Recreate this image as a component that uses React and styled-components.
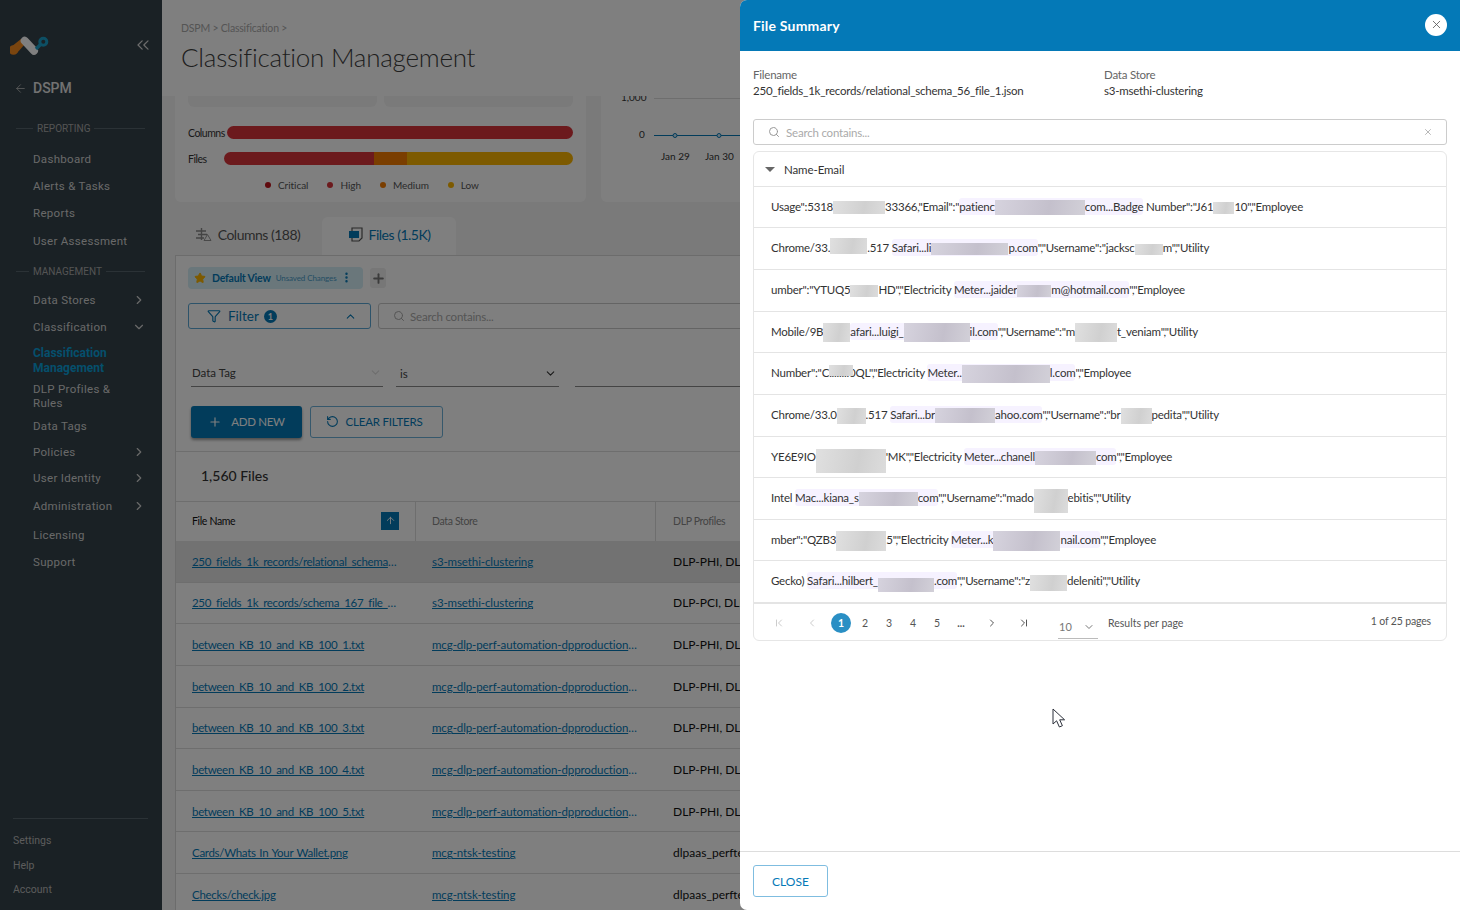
import React from "react"
import styled, { createGlobalStyle } from "styled-components"
import {
  ArrowLeft, ArrowUp, ChevronDown, ChevronFirst, ChevronLast, ChevronLeft, ChevronRight,
  ChevronUp, ChevronsLeft, EllipsisVertical, Filter, Plus, RotateCcw, Search, Star, X,
} from "lucide-react"

const BLUE = "#0479b7"

const GlobalStyle = createGlobalStyle`
  html, body { margin: 0; padding: 0; background: #fff; }
  * { box-sizing: border-box; }
`

const NAV_TOP = [
  { label: "Dashboard", h: 27 },
  { label: "Alerts & Tasks", h: 27 },
  { label: "Reports", h: 27 },
  { label: "User Assessment", h: 29 },
]

const FILES = [
  ["250_fields_1k_records/relational_schema_56_file_1.json", "s3-msethi-clustering", "DLP-PHI, DLP-PCI", true],
  ["250_fields_1k_records/schema_167_file_1.json", "s3-msethi-clustering", "DLP-PCI, DLP-PHI"],
  ["between_KB_10_and_KB_100_1.txt", "mcg-dlp-perf-automation-dpproduction-data", "DLP-PHI, DLP-PCI"],
  ["between_KB_10_and_KB_100_2.txt", "mcg-dlp-perf-automation-dpproduction-data", "DLP-PHI, DLP-PCI"],
  ["between_KB_10_and_KB_100_3.txt", "mcg-dlp-perf-automation-dpproduction-data", "DLP-PHI, DLP-PCI"],
  ["between_KB_10_and_KB_100_4.txt", "mcg-dlp-perf-automation-dpproduction-data", "DLP-PHI, DLP-PCI"],
  ["between_KB_10_and_KB_100_5.txt", "mcg-dlp-perf-automation-dpproduction-data", "DLP-PHI, DLP-PCI"],
  ["Cards/Whats In Your Wallet.png", "mcg-ntsk-testing", "dlpaas_perftest"],
  ["Checks/check.jpg", "mcg-ntsk-testing", "dlpaas_perftest"],
]

function Logo () {
  return (
    <svg width="40" height="22" viewBox="0 0 40 22">
      <path d="M1 13L11 5l4 5-8 9z" fill="#f58a1f" />
      <circle cx="3.5" cy="16" r="4.8" fill="#f58a1f" />
      <path d="M14.7 6.7L24 16.7" stroke="#fff" strokeWidth="8" strokeLinecap="round" />
      <path d="M26 15l5-5" stroke="#1a9fc8" strokeWidth="3.4" />
      <circle cx="33.3" cy="7.7" r="3.5" fill="none" stroke="#1a9fc8" strokeWidth="3" />
    </svg>
  )
}

function ColumnsIcon () {
  return (
    <svg width="17" height="16" viewBox="0 0 17 16" fill="none" stroke="#888" strokeWidth="1.4">
      <path d="M1 5h10M3 8.5h9M1 12h8M6.5 2v12" />
      <path d="M12.5 8.5l3.5 6h-7z" strokeWidth="0.9" />
    </svg>
  )
}

function FilesIcon () {
  return (
    <svg width="15" height="15" viewBox="0 0 15 15">
      <path d="M4 1h10v10l-3 3H4z" fill="none" stroke="#555" strokeWidth="1.2" />
      <rect x="1" y="4" width="10" height="7" fill={BLUE} />
    </svg>
  )
}

function Chart () {
  return (
    <ChartSvg width="160" height="106" viewBox="0 0 160 106">
      <g fontFamily="Lato, sans-serif" fontSize="10" fill="#333">
        <text x="20" y="5">1,000</text>
        <text x="38" y="42">0</text>
        <text x="60" y="64">Jan 29</text>
        <text x="104" y="64">Jan 30</text>
      </g>
      <path d="M53 2.5H160" stroke="#ddd" />
      <path d="M53 39.5H160" stroke={BLUE} />
      <circle cx="74" cy="39.5" r="2" fill="#cfe7f5" stroke={BLUE} />
      <circle cx="118" cy="39.5" r="2" fill="#cfe7f5" stroke={BLUE} />
    </ChartSvg>
  )
}

function Cursor () {
  return (
    <CursorSvg width="14" height="20" viewBox="0 0 14 20">
      <path d="M1 1v15l3.6-3.2L7.4 19l3-1.3-2.7-5.9H12.6z" fill="#fff" stroke="#2b2f3a" strokeWidth="1" strokeLinejoin="round" />
    </CursorSvg>
  )
}

export default function App () {
  return (
    <>
      <GlobalStyle />
      <Page>
        <Sidebar>
          <LogoRow>
            <Logo />
            <ChevronsLeft size={20} strokeWidth={1.5} color="#d8d8d8" />
          </LogoRow>
          <ProductRow>
            <ArrowLeft size={13} strokeWidth={1.5} color="#bbb" />
            <ProductName>DSPM</ProductName>
          </ProductRow>

          <NavSection $indent={21} $top={23}>REPORTING</NavSection>
          <NavList $top={10}>
            {NAV_TOP.map(i => <NavItem key={i.label} $h={i.h}>{i.label}</NavItem>)}
          </NavList>

          <NavSection $indent={17} $top={9}>MANAGEMENT</NavSection>
          <NavList $top={7}>
            <NavItem $h={29}>Data Stores<ChevronRight size={14} /></NavItem>
            <NavItem $h={25}>Classification<ChevronDown size={14} /></NavItem>
            <NavActive>Classification Management</NavActive>
            <NavSub>DLP Profiles &amp; Rules</NavSub>
            <NavItem $h={25}>Data Tags</NavItem>
            <NavItem $h={27}>Policies<ChevronRight size={14} /></NavItem>
            <NavItem $h={26}>User Identity<ChevronRight size={14} /></NavItem>
            <NavItem $h={30}>Administration<ChevronRight size={14} /></NavItem>
            <NavItem $h={27}>Licensing</NavItem>
            <NavItem $h={27}>Support</NavItem>
          </NavList>

          <SideFooter>
            <FootLink>Settings</FootLink>
            <FootLink>Help</FootLink>
            <FootLink>Account</FootLink>
          </SideFooter>
        </Sidebar>

        <Main>
          <PageHeader>
            <Crumbs>DSPM &gt; Classification &gt;</Crumbs>
            <Title>Classification Management</Title>
          </PageHeader>

          <CardsRow>
            <SeverityCard>
              <SubCards><SubCard /><SubCard /></SubCards>
              <BarRow>
                <BarLabel>Columns</BarLabel>
                <Bar $left={227}><BarPart $c="#d8343a" $grow={1} /></Bar>
              </BarRow>
              <BarRow>
                <BarLabel>Files</BarLabel>
                <Bar $left={224}>
                  <BarPart $c="#d8343a" $grow={150} />
                  <BarPart $c="#f57c00" $grow={33} />
                  <BarPart $c="#fab400" $grow={166} />
                </Bar>
              </BarRow>
              <Legend>
                <LegendItem $c="#c0141c">Critical</LegendItem>
                <LegendItem $c="#d8343a">High</LegendItem>
                <LegendItem $c="#f57c00">Medium</LegendItem>
                <LegendItem $c="#fab400">Low</LegendItem>
              </Legend>
            </SeverityCard>
            <ChartCard><Chart /></ChartCard>
          </CardsRow>

          <Tabs>
            <Tab $w={145}><ColumnsIcon />Columns (188)</Tab>
            <Tab $w={134} $active><FilesIcon />Files (1.5K)</Tab>
          </Tabs>

          <Panel>
            <ViewRow>
              <ViewChip>
                <Star size={12} fill="#fab400" color="#fab400" />
                <ViewName>Default View</ViewName>
                <ViewNote>Unsaved Changes</ViewNote>
                <EllipsisVertical size={13} color={BLUE} strokeWidth={2.5} />
              </ViewChip>
              <AddView><Plus size={15} strokeWidth={3} color="#777" /></AddView>
            </ViewRow>

            <SearchRow>
              <FilterBox>
                <Filter size={14} color={BLUE} />
                <FilterText>Filter</FilterText>
                <FilterCount>1</FilterCount>
                <ChevronUp size={13} color={BLUE} />
              </FilterBox>
              <TableSearch>
                <Search size={12} color="#aaa" />
                Search contains...
              </TableSearch>
            </SearchRow>

            <FilterRow>
              <FilterSelect $w={192} $muted>Data Tag<ChevronDown size={13} color="#ddd" /></FilterSelect>
              <FilterSelect $w={163}><span>is</span><ChevronDown size={13} color="#333" /></FilterSelect>
              <FilterSelect $w={400} $ml={3} />
            </FilterRow>

            <ActionRow>
              <AddButton><Plus size={14} />ADD NEW</AddButton>
              <ClearButton><RotateCcw size={13} />CLEAR FILTERS</ClearButton>
            </ActionRow>

            <CountRow>1,560 Files</CountRow>

            <HeadRow>
              <HeadCell $dark>File Name<SortButton><ArrowUp size={11} /></SortButton></HeadCell>
              <HeadCell>Data Store</HeadCell>
              <HeadCell $pad={17}>DLP Profiles</HeadCell>
            </HeadRow>
            {FILES.map(([name, store, profile, active], i) => (
              <FileRow key={i} $active={active}>
                <FileCell><FileLink $tight>{name}</FileLink></FileCell>
                <FileCell><FileLink>{store}</FileLink></FileCell>
                <FileCell $pad={17}>{profile}</FileCell>
              </FileRow>
            ))}
          </Panel>
        </Main>

        <Overlay />

        <Drawer>
          <DrawerHeader>
            File Summary
            <CloseRound><X size={13} strokeWidth={1.5} /></CloseRound>
          </DrawerHeader>

          <DrawerBody>
            <MetaRow>
              <MetaBlock $w={351}>
                <MetaLabel>Filename</MetaLabel>
                <MetaValue>250_fields_1k_records/relational_schema_56_file_1.json</MetaValue>
              </MetaBlock>
              <MetaBlock>
                <MetaLabel>Data Store</MetaLabel>
                <MetaValue>s3-msethi-clustering</MetaValue>
              </MetaBlock>
            </MetaRow>

            <SummarySearch>
              <Search size={12} color="#999" />
              <SearchHint>Search contains...</SearchHint>
              <X size={10} color="#aaa" />
            </SummarySearch>

            <MatchPanel>
              <MatchHead><Caret />Name-Email</MatchHead>

              <MatchRow>
                Usage":5318<Redact $w={52} $h={13} />33366,"Email":"<Mark>patienc<Redact $v $w={90} $h={15} />com...Badge</Mark> Number":"J61<Redact $w={21} $h={12} />10","Employee
              </MatchRow>
              <MatchRow>
                Chrome/33.<Redact $w={37} $h={16} $top={-3} />.517 <Mark>Safari...li<Redact $v $w={77} $h={12} />p.com</Mark>","Username":"jacksc<Redact $w={28} $h={11} />m","Utility
              </MatchRow>
              <MatchRow>
                umber":"YTUQ5<Redact $w={28} $h={12} />HD","Electricity <Mark>Meter...jaider<Redact $v $w={34} $h={12} />m@hotmail.com</Mark>","Employee
              </MatchRow>
              <MatchRow>
                Mobile/9B<Redact $w={27} $h={19} />
                <Mark>afari...luigi_<Redact $v $w={66} $h={19} />il.com</Mark>","Username":"m<Redact $w={42} $h={19} />t_veniam","Utility
              </MatchRow>
              <MatchRow>
                Number":"C<Redact $w={24} $h={11} $top={-4} $over />........0QL","Electricity <Mark>Meter..<Redact $v $w={88} $h={18} />l.com</Mark>","Employee
              </MatchRow>
              <MatchRow>
                Chrome/33.0<Redact $w={29} $h={16} />.517 <Mark>Safari...br<Redact $v $w={60} $h={15} />ahoo.com</Mark>","Username":"br<Redact $w={31} $h={16} />pedita","Utility
              </MatchRow>
              <MatchRow>
                YE6E9IO<Redact $w={70} $h={24} $top={3} />'MK","Electricity <Mark>Meter...chanell<Redact $v $w={61} $h={14} />com</Mark>","Employee
              </MatchRow>
              <MatchRow>
                Intel <Mark>Mac...kiana_s<Redact $v $w={59} $h={14} />com</Mark>","Username":"mado<Redact $w={34} $h={24} $top={2} />ebitis","Utility
              </MatchRow>
              <MatchRow>
                mber":"QZB3<Redact $w={50} $h={20} />5","Electricity <Mark>Meter...k<Redact $v $w={67} $h={20} />nail.com</Mark>","Employee
              </MatchRow>
              <MatchRow>
                Gecko) <Mark>Safari...hilbert_<Redact $v $w={56} $h={14} $top={2} />.com</Mark>","Username":"z<Redact $w={37} $h={16} />deleniti","Utility
              </MatchRow>

              <Pager>
                <PageSlot $w={32} $off><ChevronFirst size={12} /></PageSlot>
                <PageSlot $w={34} $off><ChevronLeft size={12} /></PageSlot>
                <PageSlot><PageCurrent>1</PageCurrent></PageSlot>
                <PageSlot>2</PageSlot>
                <PageSlot>3</PageSlot>
                <PageSlot>4</PageSlot>
                <PageSlot>5</PageSlot>
                <PageSlot><b>...</b></PageSlot>
                <PageSlot $w={32} $next><ChevronRight size={12} /></PageSlot>
                <PageSlot $w={32}><ChevronLast size={12} /></PageSlot>
                <PerPage>10<ChevronDown size={12} /></PerPage>
                <PerPageLabel>Results per page</PerPageLabel>
                <PageCount>1 of 25 pages</PageCount>
              </Pager>
            </MatchPanel>
          </DrawerBody>

          <DrawerFooter>
            <CloseButton>CLOSE</CloseButton>
          </DrawerFooter>
        </Drawer>

        <Cursor />
      </Page>
    </>
  )
}

const Page = styled.div`
  position: relative;
  display: grid;
  grid-template-columns: 162px 1fr;
  width: 1460px;
  height: 910px;
  overflow: hidden;
  font-family: Lato, "Liberation Sans", sans-serif;
  color: #333;
`

/* sidebar */

const Sidebar = styled.aside`
  display: flex;
  flex-direction: column;
  height: 910px;
  background: #34424a;
  font-family: Roboto, "Liberation Sans", sans-serif;
  color: #d2d2d2;
`
const LogoRow = styled.div`
  display: flex;
  align-items: center;
  justify-content: space-between;
  height: 22px;
  margin-top: 34px;
  padding: 0 9px 0 10px;
`
const ProductRow = styled.div`
  display: flex;
  align-items: center;
  gap: 6px;
  height: 20px;
  margin-top: 22px;
  padding-left: 14px;
`
const ProductName = styled.div`
  font-size: 14px;
  font-weight: 500;
  color: #e4e4e4;
`
const NavSection = styled.div`
  display: flex;
  align-items: center;
  gap: 4px;
  height: 14px;
  margin: ${p => p.$top}px 17px 0 16px;
  font-size: 10px;
  color: #a8a8a8;
  &::before {
    content: "";
    flex: 0 0 ${p => p.$indent - 4}px;
    height: 1px;
    background: #56646c;
  }
  &::after {
    content: "";
    flex: 1;
    height: 1px;
    background: #56646c;
  }
`
const NavList = styled.div`
  display: flex;
  flex-direction: column;
  margin-top: ${p => p.$top}px;
`
const NavItem = styled.div`
  display: flex;
  align-items: center;
  justify-content: space-between;
  height: ${p => p.$h}px;
  padding: 0 16px 0 33px;
  font-size: 11.5px;
  letter-spacing: 0.3px;
`
const NavActive = styled.div`
  padding: 0 30px 0 33px;
  margin-top: 7px;
  font-size: 12px;
  font-weight: 700;
  line-height: 15px;
  color: #0a9fd8;
`
const NavSub = styled.div`
  padding: 0 30px 0 33px;
  margin: 6px 0 3px;
  font-size: 11.5px;
  line-height: 14px;
  letter-spacing: 0.3px;
`
const SideFooter = styled.div`
  margin: auto 14px 0 13px;
  padding-top: 10px;
  height: 92px;
  border-top: 1px solid #56646c;
`
const FootLink = styled.div`
  height: 24.5px;
  line-height: 24px;
  font-size: 10.5px;
  color: #b8b8b8;
`

/* main page behind the drawer */

const Main = styled.main`
  display: flex;
  flex-direction: column;
  min-width: 0;
  height: 910px;
  overflow: hidden;
  background: #f5f5f5;
`
const PageHeader = styled.header`
  flex: 0 0 96px;
  padding: 21px 19px 0;
  background: #fff;
`
const Crumbs = styled.div`
  font-size: 10.5px;
  line-height: 14px;
  letter-spacing: -0.2px;
  color: #aaa;
`
const Title = styled.h1`
  margin: 4px 0 0;
  font-size: 26px;
  font-weight: 300;
  line-height: 36px;
  letter-spacing: -0.25px;
  color: #3e3e3e;
`
const CardsRow = styled.div`
  display: flex;
  flex: 0 0 106px;
  gap: 15px;
  padding-left: 13px;
`
const SeverityCard = styled.section`
  flex: 0 0 411px;
  padding: 0 13px;
  background: #fff;
  border-radius: 0 0 6px 6px;
`
const SubCards = styled.div`
  display: flex;
  gap: 7px;
  height: 11px;
  margin-bottom: 19px;
`
const SubCard = styled.div`
  flex: 1;
  background: #f5f5f5;
  border-radius: 0 0 6px 6px;
`
const BarRow = styled.div`
  position: relative;
  display: flex;
  align-items: center;
  height: 13px;
  margin-bottom: 13px;
`
const BarLabel = styled.div`
  flex: 0 0 auto;
  font-size: 10.5px;
  letter-spacing: -0.5px;
  color: #333;
`
const Bar = styled.div`
  position: absolute;
  left: ${p => p.$left - 188}px;
  right: 0;
  top: 0;
  display: flex;
  height: 13px;
  overflow: hidden;
  border-radius: 7px;
`
const BarPart = styled.div`
  flex: ${p => p.$grow} 0 0;
  background: ${p => p.$c};
`
const Legend = styled.div`
  display: flex;
  gap: 19px;
  padding-left: 77px;
`
const LegendItem = styled.div`
  display: flex;
  align-items: center;
  gap: 7px;
  font-size: 10px;
  line-height: 14px;
  letter-spacing: -0.05px;
  color: #555;
  &::before {
    content: "";
    width: 6px;
    height: 6px;
    border-radius: 50%;
    background: ${p => p.$c};
  }
`
const ChartCard = styled.section`
  flex: 1;
  background: #fff;
  border-radius: 0 0 6px 6px;
`
const ChartSvg = styled.svg`
  display: block;
`
const Tabs = styled.nav`
  display: flex;
  flex: 0 0 38px;
  gap: 2px;
  margin-top: 15px;
  padding-left: 13px;
`
const Tab = styled.div`
  display: flex;
  align-items: center;
  justify-content: center;
  gap: 6px;
  width: ${p => p.$w}px;
  padding-bottom: 4px;
  font-size: 14px;
  letter-spacing: -0.5px;
  color: ${p => p.$active ? BLUE : "#555"};
  background: ${p => p.$active ? "#fff" : "#f5f5f5"};
  border-radius: 6px 6px 0 0;
`
const Panel = styled.section`
  flex: 1;
  margin-left: 13px;
  background: #fff;
  border-top: 1px solid #d8d8d8;
  border-left: 1px solid #d8d8d8;
`
const ViewRow = styled.div`
  display: flex;
  align-items: center;
  gap: 7px;
  padding: 11px 0 0 12px;
`
const ViewChip = styled.div`
  display: flex;
  align-items: center;
  width: 175px;
  height: 22px;
  padding: 0 0 1px 6px;
  background: #d4eef6;
  border-radius: 4px;
`
const ViewName = styled.span`
  margin-left: 6px;
  font-size: 10.5px;
  font-weight: 700;
  letter-spacing: -0.2px;
  color: ${BLUE};
`
const ViewNote = styled.span`
  margin: 0 3px 0 5px;
  font-size: 8px;
  letter-spacing: -0.1px;
  color: #4a9cc8;
`
const AddView = styled.div`
  display: flex;
  align-items: center;
  justify-content: center;
  width: 16px;
  height: 20px;
  background: #eee;
  border-radius: 3px;
`
const SearchRow = styled.div`
  display: flex;
  gap: 7px;
  padding: 14px 0 0 12px;
`
const FilterBox = styled.div`
  display: flex;
  align-items: center;
  width: 183px;
  height: 26px;
  padding: 0 13px 0 18px;
  border: 1px solid #5ba7d4;
  border-radius: 3px;
  color: ${BLUE};
  svg:last-child { margin-left: auto; }
`
const FilterText = styled.span`
  margin: 0 5px 0 7px;
  font-size: 13.5px;
`
const FilterCount = styled.span`
  display: flex;
  align-items: center;
  justify-content: center;
  width: 13px;
  height: 13px;
  font-size: 9px;
  font-weight: 700;
  color: #fff;
  background: ${BLUE};
  border-radius: 50%;
`
const TableSearch = styled.div`
  display: flex;
  align-items: center;
  gap: 5px;
  flex: 1;
  height: 26px;
  padding-left: 14px;
  font-size: 11.5px;
  letter-spacing: -0.2px;
  color: #aaa;
  border: 1px solid #c8c8c8;
  border-radius: 3px;
`
const FilterRow = styled.div`
  display: flex;
  gap: 13px;
  height: 30px;
  margin: 28px 0 0 15px;
`
const FilterSelect = styled.div`
  display: flex;
  align-items: center;
  justify-content: space-between;
  flex: 0 0 ${p => p.$w}px;
  margin-left: ${p => p.$ml || 0}px;
  padding: ${p => p.$muted ? "2px 1px 0" : "4px 2px 0 4px"};
  font-size: 11.5px;
  color: #444;
  border-bottom: 1px solid #888;
`
const AddButton = styled.button`
  display: flex;
  align-items: center;
  justify-content: center;
  gap: 9px;
  width: 111px;
  height: 32px;
  padding: 0 0 1px;
  font: 400 11.5px Lato, sans-serif;
  letter-spacing: -0.3px;
  color: #fff;
  background: ${BLUE};
  border: 0;
  border-radius: 3px;
  box-shadow: 0 2px 3px rgba(0, 0, 0, 0.4);
`
const ClearButton = styled(AddButton)`
  width: 133px;
  gap: 7px;
  padding-right: 5px;
  letter-spacing: -0.2px;
  color: ${BLUE};
  background: #fff;
  border: 1px solid #6db0d8;
  box-shadow: none;
`
const ActionRow = styled.div`
  display: flex;
  gap: 8px;
  padding: 19px 0 13px 15px;
  border-bottom: 1px solid #ddd;
`
const CountRow = styled.div`
  height: 49px;
  padding-left: 25px;
  font-size: 14px;
  font-weight: 500;
  line-height: 48px;
  color: #333;
`
const HeadRow = styled.div`
  display: grid;
  grid-template-columns: 240px 240px 1fr;
  height: 40px;
  border-top: 1px solid #ddd;
`
const HeadCell = styled.div`
  display: flex;
  align-items: center;
  justify-content: space-between;
  padding: 0 16px 2px ${p => p.$pad || 16}px;
  font-size: 10.5px;
  letter-spacing: -0.35px;
  color: ${p => p.$dark ? "#111" : "#888"};
  border-right: 1px solid #ddd;
`
const SortButton = styled.span`
  display: flex;
  align-items: center;
  justify-content: center;
  width: 18px;
  height: 18px;
  color: #fff;
  background: ${BLUE};
`
const FileRow = styled.div`
  display: grid;
  grid-template-columns: 240px 240px 1fr;
  align-items: center;
  height: 41.65px;
  background: ${p => p.$active ? "#e4e4e4" : "#fff"};
  border-bottom: 1px solid #ddd;
`
const FileCell = styled.div`
  min-width: 0;
  padding-left: ${p => p.$pad || 16}px;
  font-size: 12px;
  white-space: nowrap;
  color: #111;
`
const FileLink = styled.a`
  display: block;
  max-width: 205px;
  overflow: hidden;
  text-overflow: ellipsis;
  font-size: 11.5px;
  letter-spacing: ${p => p.$tight ? -0.3 : -0.1}px;
  word-spacing: 1px;
  color: ${BLUE};
  text-decoration: underline;
`
const Overlay = styled.div`
  position: absolute;
  inset: 0;
  background: rgba(0, 0, 0, 0.5);
`

/* file summary drawer */

const Drawer = styled.aside`
  position: absolute;
  top: 0;
  right: 0;
  display: flex;
  flex-direction: column;
  width: 720px;
  height: 910px;
  overflow: hidden;
  background: #fff;
  border-radius: 7px 0 0 7px;
`
const DrawerHeader = styled.header`
  display: flex;
  align-items: center;
  justify-content: space-between;
  flex: 0 0 51px;
  padding: 0 13px;
  font-size: 14px;
  font-weight: 700;
  letter-spacing: 0.2px;
  color: #fff;
  background: ${BLUE};
`
const CloseRound = styled.span`
  display: flex;
  align-items: center;
  justify-content: center;
  width: 22px;
  height: 22px;
  margin-top: -2px;
  color: #555;
  background: #fff;
  border-radius: 50%;
`
const DrawerBody = styled.div`
  flex: 1;
  padding: 0 13px;
`
const MetaRow = styled.div`
  display: flex;
  padding-top: 16px;
`
const MetaBlock = styled.div`
  width: ${p => p.$w ? `${p.$w}px` : "auto"};
  font-size: 11.5px;
  line-height: 16px;
  letter-spacing: -0.22px;
`
const MetaLabel = styled.div`
  color: #666;
`
const MetaValue = styled.div`
  color: #333;
`
const SummarySearch = styled.div`
  display: flex;
  align-items: center;
  height: 26px;
  margin-top: 20px;
  padding: 0 13px 0 14px;
  border: 1px solid #ccc;
  border-radius: 3px;
`
const SearchHint = styled.span`
  flex: 1;
  margin-left: 6px;
  font-size: 11.5px;
  letter-spacing: -0.2px;
  color: #aaa;
`
const MatchPanel = styled.section`
  height: 490px;
  margin-top: 6px;
  border: 1px solid #e6e6e6;
  border-radius: 6px;
`
const MatchHead = styled.div`
  display: flex;
  align-items: center;
  gap: 9px;
  height: 33.7px;
  padding: 1px 0 0 11px;
  font-size: 11.5px;
  letter-spacing: -0.1px;
  color: #333;
`
const Caret = styled.span`
  width: 0;
  height: 0;
  border-left: 5px solid transparent;
  border-right: 5px solid transparent;
  border-top: 5px solid #666;
`
const MatchRow = styled.div`
  height: 41.65px;
  padding-left: 17px;
  font-size: 11.5px;
  line-height: 40px;
  letter-spacing: -0.22px;
  white-space: nowrap;
  color: #333;
  border-top: 1px solid #e4e4e4;
`
const Mark = styled.span`
  padding: 2px 0;
  background: #f6f2ff;
  border-radius: 3px;
`
const Redact = styled.span`
  position: relative;
  top: ${p => p.$top || 0}px;
  display: inline-block;
  width: ${p => p.$w}px;
  height: ${p => p.$h}px;
  margin: -12px ${p => p.$over ? -p.$w : 0}px -12px 0;
  vertical-align: middle;
  background: ${p => p.$v
    ? "linear-gradient(100deg, #d6d3de, #c4c0cc 60%, #d2d0d8)"
    : "linear-gradient(100deg, #e0e0e0, #d0d0d0 60%, #dcdcdc)"};
`
const Pager = styled.div`
  display: flex;
  align-items: center;
  height: 38px;
  padding: 2px 15px 0 9px;
  font-size: 10.5px;
  color: #666;
  border-top: 2px solid #e4e4e4;
`
const PageSlot = styled.span`
  display: flex;
  align-items: center;
  justify-content: center;
  flex: 0 0 ${p => p.$w || 24}px;
  height: 20px;
  margin-left: ${p => p.$next ? 3 : 0}px;
  color: ${p => p.$off ? "#ccc" : "#555"};
`
const PageCurrent = styled.span`
  display: flex;
  align-items: center;
  justify-content: center;
  width: 20px;
  height: 20px;
  font-weight: 700;
  color: #fff;
  background: #2a8fc4;
  border-radius: 50%;
`
const PerPage = styled.div`
  display: flex;
  align-items: center;
  justify-content: space-between;
  width: 40px;
  height: 26px;
  margin: 5px 0 0 18px;
  padding: 3px 3px 0 1px;
  font-size: 11px;
  color: #777;
  border-bottom: 1px solid #bbb;
`
const PerPageLabel = styled.span`
  margin-left: 10px;
  color: #555;
`
const PageCount = styled.span`
  margin: -5px 0 0 auto;
  letter-spacing: -0.15px;
  color: #555;
`
const DrawerFooter = styled.footer`
  flex: 0 0 59px;
  padding: 13px 13px 0;
  border-top: 1px solid #ddd;
`
const CloseButton = styled.button`
  width: 75px;
  height: 32px;
  padding: 0;
  font: 400 12px Lato, sans-serif;
  color: ${BLUE};
  background: #fff;
  border: 1px solid #7fbde0;
  border-radius: 3px;
`
const CursorSvg = styled.svg`
  position: absolute;
  left: 1052px;
  top: 708px;
`
